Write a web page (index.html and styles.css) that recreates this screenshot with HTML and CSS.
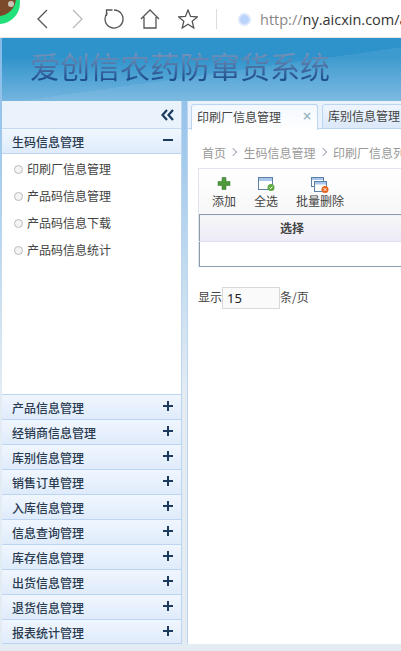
FILE: index.html
```html
<!DOCTYPE html>
<html lang="en">
<head>
    <meta charset="UTF-8">
    <title>爱创信农药防窜货系统</title>
    <link rel="stylesheet" href="styles.css">
</head>
<body>
<div class="browser-bar">
    <svg class="avatar" width="22" height="25" viewBox="0 0 22 25">
        <circle cx="-1" cy="3" r="21" fill="#22e07a"/>
        <circle cx="-2" cy="-2" r="18" fill="#7a4a2a"/>
        <circle cx="11" cy="4" r="3" fill="#c9c4b8"/>
    </svg>
    <svg class="nav-icon back" width="11" height="20" viewBox="0 0 11 20"><path d="M10 1 L1 10 L10 19"/></svg>
    <svg class="nav-icon forward" width="11" height="20" viewBox="0 0 11 20"><path d="M1 1 L10 10 L1 19"/></svg>
    <svg class="nav-icon reload" width="20" height="20" viewBox="0 0 20 20"><path d="M10 1 A9 9 0 1 1 3.5 3.8 M8.5 1 H2.5 V7"/></svg>
    <svg class="nav-icon home" width="20" height="20" viewBox="0 0 20 20"><path d="M1 10 L10 1 L19 10 M4 8 V19 H16 V8"/></svg>
    <svg class="nav-icon star" width="20" height="20" viewBox="0 0 20 20"><path d="M10 1 L12.6 7.4 L19.4 7.9 L14.2 12.2 L15.8 19 L10 15.3 L4.2 19 L5.8 12.2 L.6 7.9 L7.4 7.4 Z"/></svg>
    <span class="bar-divider"></span>
    <span class="site-dot"></span>
    <span class="url"><span class="url-scheme">http://</span>ny.aicxin.com/a</span>
</div>

<div class="banner">
    <h1 class="system-title">爱创信农药防窜货系统</h1>
</div>

<div class="layout">
    <div class="sidebar">
        <div class="collapse-bar">
            <svg width="13" height="12" viewBox="0 0 13 12"><path d="M6 1 L1.5 6 L6 11 M12 1 L7.5 6 L12 11"/></svg>
        </div>
        <div class="menu-head">
            <span>生码信息管理</span>
            <span class="minus"></span>
        </div>
        <ul class="menu-items">
            <li>印刷厂信息管理</li>
            <li>产品码信息管理</li>
            <li>产品码信息下载</li>
            <li>产品码信息统计</li>
        </ul>
        <div class="menu-head closed"><span>产品信息管理</span><span class="plus"></span></div>
        <div class="menu-head closed"><span>经销商信息管理</span><span class="plus"></span></div>
        <div class="menu-head closed"><span>库别信息管理</span><span class="plus"></span></div>
        <div class="menu-head closed"><span>销售订单管理</span><span class="plus"></span></div>
        <div class="menu-head closed"><span>入库信息管理</span><span class="plus"></span></div>
        <div class="menu-head closed"><span>信息查询管理</span><span class="plus"></span></div>
        <div class="menu-head closed"><span>库存信息管理</span><span class="plus"></span></div>
        <div class="menu-head closed"><span>出货信息管理</span><span class="plus"></span></div>
        <div class="menu-head closed"><span>退货信息管理</span><span class="plus"></span></div>
        <div class="menu-head closed last"><span>报表统计管理</span><span class="plus"></span></div>
    </div>

    <div class="main">
        <div class="tabs">
            <div class="tab active"><span>印刷厂信息管理</span><span class="tab-close">×</span></div>
            <div class="tab"><span>库别信息管理</span></div>
        </div>
        <div class="panel">
            <div class="crumbs">
                <span>首页</span><span class="sep"></span><span>生码信息管理</span><span class="sep"></span><span>印刷厂信息列表</span>
            </div>
            <div class="grid">
                <div class="toolbar">
                    <div class="tool">
                        <svg width="18" height="15" viewBox="0 0 18 15"><path class="plus-icon" d="M7 .5 H11 V4.500 H15 V8.500 H11 V12.500 H7 V8.500 H3 V4.500 H7 Z"/></svg>
                        <span>添加</span>
                    </div>
                    <div class="tool">
                        <svg width="18" height="15" viewBox="0 0 18 15">
                            <rect class="win" x="1.500" y=".5" width="14" height="12"/>
                            <rect class="win-top" x="2" y="1" width="13" height="3"/>
                            <circle cx="14" cy="10.500" r="3.500" fill="#5fa83f"/>
                            <path class="badge-mark" d="M12.500 10.500 L13.700 11.700 L15.500 9.500"/>
                        </svg>
                        <span>全选</span>
                    </div>
                    <div class="tool">
                        <svg width="18" height="15" viewBox="0 0 18 15">
                            <rect class="win" x=".5" y=".5" width="12" height="9"/>
                            <rect class="win-top" x="1" y="1" width="11" height="2"/>
                            <rect class="win" x="3.500" y="4.500" width="12" height="10"/>
                            <rect class="win-top" x="4" y="5" width="11" height="2.500"/>
                            <circle cx="14" cy="12.500" r="3.500" fill="#e8641c"/>
                            <path class="badge-mark" d="M12.700 11.200 L15.300 13.800 M15.300 11.200 L12.700 13.800"/>
                        </svg>
                        <span>批量删除</span>
                    </div>
                </div>
                <table class="data-table">
                    <thead><tr><th>选择</th></tr></thead>
                    <tbody><tr><td></td></tr></tbody>
                </table>
            </div>
            <div class="page-size">
                <span class="page-label">显示</span><input type="text" value="15"><span class="page-label">条/页</span>
            </div>
        </div>
    </div>
</div>
</body>
</html>
```
FILE: styles.css
```css
* {
    box-sizing: border-box;
}
html, body {
    margin: 0;
    height: 651px;
    overflow: hidden;
}
body {
    width: 401px;
    font-family: "Noto Sans CJK SC", "Noto Sans", sans-serif;
    font-size: 12px;
    color: #444;
    background: linear-gradient(#79b4e6, #e3ecf3 60%);
}

/* browser chrome */
.browser-bar {
    height: 38px;
    background: #fff;
    border-bottom: 1px solid #e8e8e8;
    position: relative;
    display: flex;
    align-items: center;
    padding: 1px 0 0 37px;
}
.avatar {
    position: absolute;
    left: 0;
    top: 0;
}
.nav-icon {
    fill: none;
    stroke: #555;
    stroke-width: 1.3;
    flex: none;
}
.nav-icon.forward {
    stroke: #bbb;
    margin-left: 24px;
}
.nav-icon.reload {
    margin-left: 21px;
}
.nav-icon.home {
    margin-left: 16px;
}
.nav-icon.star {
    margin-left: 18px;
}
.bar-divider {
    flex: none;
    width: 1px;
    height: 20px;
    background: #ddd;
    margin-left: 18px;
}
.site-dot {
    flex: none;
    width: 13px;
    height: 13px;
    border-radius: 50%;
    background: #b9d3fb;
    border: 2px solid #dbe7fd;
    margin-left: 21px;
}
.url {
    flex: none;
    margin-left: 9px;
    font-family: "Open Sans", sans-serif;
    font-size: 14.5px;
    color: #333;
    white-space: nowrap;
}
.url-scheme {
    color: #888;
}

/* banner */
.banner {
    height: 63px;
    background:
        linear-gradient(172deg, transparent 55%, rgba(255,255,255,.07) 55%),
        linear-gradient(#2f93cb 30%, #74b5e0);
    margin-left: 2px;
    padding: 6px 0 0 28px;
}
.system-title {
    margin: 0;
    font-size: 30px;
    font-weight: 400;
    line-height: 42px;
    color: transparent;
    background: linear-gradient(#7f9cc0 15%, #1f4f8f 85%);
    -webkit-background-clip: text;
    background-clip: text;
    white-space: nowrap;
}

/* layout */
.layout {
    display: flex;
    height: 543px;
    padding-left: 2px;
}
.sidebar {
    width: 180px;
    background: #fff;
    border-right: 1px solid #bcd5f2;
    display: flex;
    flex-direction: column;
    flex: none;
}
.collapse-bar {
    height: 28px;
    background: #eaf3fc;
    border-bottom: 1px solid #c5d9f0;
    display: flex;
    justify-content: flex-end;
    align-items: center;
    padding-right: 7px;
}
.collapse-bar svg {
    fill: none;
    stroke: #1c3a5e;
    stroke-width: 2.2;
}
.menu-head {
    height: 25px;
    flex: none;
    display: flex;
    justify-content: space-between;
    align-items: center;
    padding: 0 8px 0 10px;
    font-weight: 500;
    color: #2a3b50;
    background: linear-gradient(#f0f6fe, #dfebfb);
    border-bottom: 1px solid #bcd5f2;
}
.menu-head.last {
    height: 24px;
    padding-top: 1px;
}
.minus, .plus {
    position: relative;
    width: 10px;
    height: 2px;
    margin-top: -2px;
    background: #1c3a5e;
}
.plus::after {
    content: "";
    position: absolute;
    left: 4px;
    top: -4px;
    width: 2px;
    height: 10px;
    background: #1c3a5e;
}
.menu-items {
    list-style: none;
    margin: 0;
    padding: 1px 0 0;
    flex: 1;
    border-bottom: 1px solid #bcd5f2;
}
.menu-items li {
    height: 27px;
    line-height: 27px;
    padding-left: 25px;
    position: relative;
}
.menu-items li::before {
    content: "";
    position: absolute;
    left: 12px;
    top: 10px;
    width: 7px;
    height: 7px;
    border-radius: 50%;
    border: 1px solid #bbb;
    background: #f4f4f4;
}

/* main area */
.main {
    margin-left: 5px;
    flex: 1;
    min-width: 0;
    background: #fff;
    border-left: 1px solid #bcd5f2;
    display: flex;
    flex-direction: column;
    overflow: hidden;
}
.tabs {
    height: 28px;
    flex: none;
    display: flex;
    padding: 3px 0 0 3px;
    gap: 4px;
    background: #eaf3fc;
    border-bottom: 1px solid #bcd5f2;
}
.tab {
    flex: none;
    height: 25px;
    padding: 0 5px 2px;
    display: flex;
    align-items: center;
    border: 1px solid #bcd5f2;
    border-radius: 3px 3px 0 0;
    background: linear-gradient(#eef5fd, #dbe8f9);
}
.tab.active {
    width: 127px;
    justify-content: space-between;
    background: linear-gradient(#f3f8fe, #fff);
    height: 26px;
    border-bottom: 0;
    padding-bottom: 3px;
}
.tab-close {
    font-family: "DejaVu Sans", sans-serif;
    color: #9db8c4;
    font-weight: 700;
    font-size: 12px;
}
.panel {
    flex: 1;
    padding: 0 0 0 10px;
    white-space: nowrap;
}
.crumbs {
    height: 39px;
    padding: 7px 0 0 4px;
    color: #999;
    display: flex;
    align-items: center;
}
.sep {
    width: 6px;
    height: 6px;
    border-top: 1px solid #aab;
    border-right: 1px solid #aab;
    transform: rotate(45deg);
    margin: 0 7.5px 0 4px;
    flex: none;
}
.grid {
    width: 300px;
    border: 1px solid #e2e4ee;
    border-bottom: 0;
}
.toolbar {
    height: 45px;
    display: flex;
    background: linear-gradient(#fff, #f7f7f7);
    padding: 8px 0 0 13px;
    gap: 18px;
}
.tool {
    display: flex;
    flex-direction: column;
    align-items: center;
    line-height: 18px;
    color: #444;
}
.tool svg {
    overflow: visible;
}
.plus-icon {
    fill: #4f9a3a;
    stroke: #2f6e24;
    stroke-width: .5;
}
.win {
    fill: #fff;
    stroke: #5e7fa8;
}
.win-top {
    fill: #a9c6ea;
}
.badge-mark {
    fill: none;
    stroke: #fff;
    stroke-width: 1;
}
.data-table {
    width: 100%;
    border-collapse: collapse;
    border: 1px solid #8a9bab;
}
.data-table th {
    height: 27px;
    padding: 0 0 2px;
    text-align: left;
    text-indent: 80px;
    font-size: 12px;
    background: linear-gradient(#f7f7f7, #ecebf8);
    border-bottom: 1px solid #e0deef;
}
.data-table td {
    height: 25px;
    padding: 0;
}
.page-size {
    display: flex;
    align-items: center;
    margin-top: 20px;
}
.page-label {
    padding-bottom: 3px;
}
.page-size input {
    width: 58px;
    height: 22px;
    border: 1px solid #d8d8d8;
    background: #fafafa;
    font-family: "Noto Sans", sans-serif;
    font-size: 13px;
    color: #222;
    padding: 0 4px;
    outline: none;
}
```
